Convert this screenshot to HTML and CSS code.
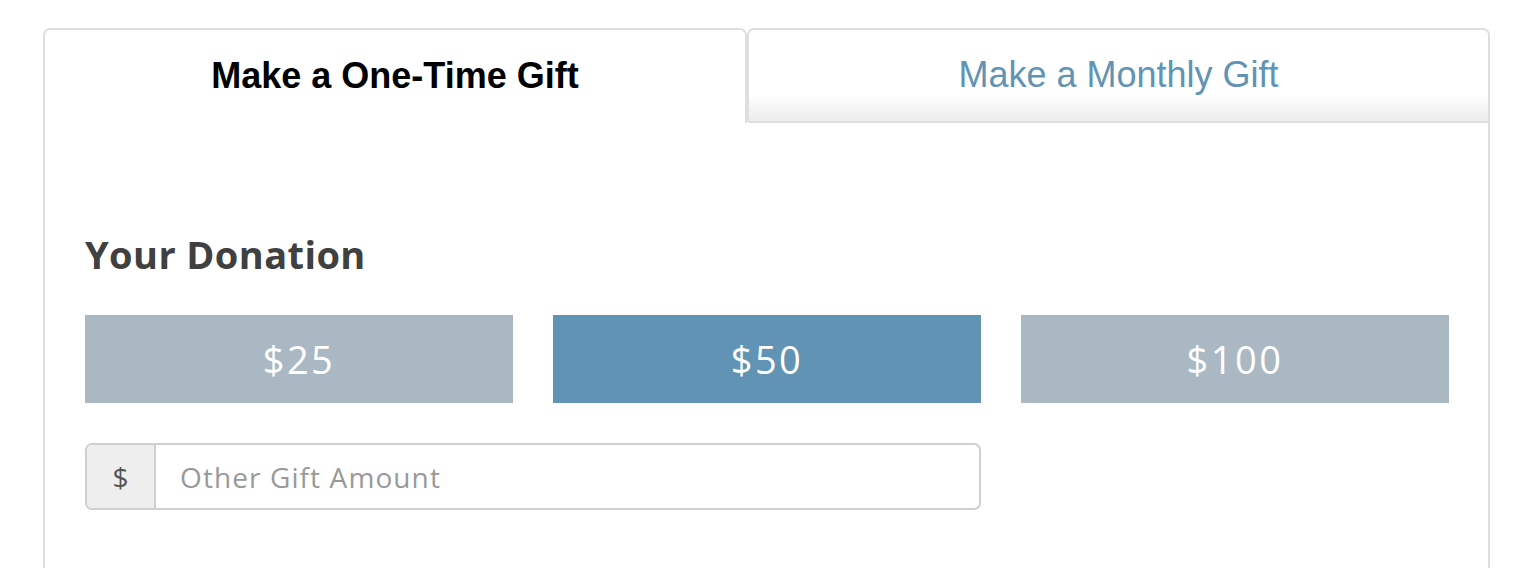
FILE: index.html
```html
<!DOCTYPE html>
<html>
<head>
<meta charset="utf-8">
<link rel="stylesheet" href="styles.css">
</head>
<body>
<div class="wrap">
  <div class="tabs">
    <div class="tab active">Make a One-Time Gift</div>
    <div class="tab inactive">Make a Monthly Gift</div>
  </div>
  <div class="panel">
    <h2 class="title">Your Donation</h2>
    <div class="amounts">
      <div class="amt">$25</div>
      <div class="amt selected">$50</div>
      <div class="amt">$100</div>
    </div>
    <div class="other">
      <span class="addon">$</span>
      <span class="field">Other Gift Amount</span>
    </div>
  </div>
</div>
</body>
</html>
```
FILE: styles.css
```css
html, body { margin: 0; padding: 0; background: #fff; overflow: hidden; }
.wrap { padding: 28px 32px 0 43px; }
.tabs { display: flex; height: 95px; }
.tab {
  box-sizing: border-box;
  display: flex; align-items: center; justify-content: center;
  font-family: "Liberation Sans", Arial, sans-serif;
  font-size: 36px;
  border: 2px solid #dedede;
  border-radius: 7px 7px 0 0;
  padding-bottom: 2px;
}
.tab.active { width: 704px; border-bottom: none; font-weight: bold; color: #000; background: #fff; }
.tab.inactive {
  flex: 1; color: #6193b5;
  border-radius: 7px 7px 0 3px;
  background: linear-gradient(to bottom, #fff 0%, #fff 70%, #ececec 100%);
}
.panel {
  border-left: 2px solid #dedede;
  border-right: 2px solid #dedede;
  padding: 106px 39px 60px 40px;
}
.title {
  margin: 0 0 36px 0;
  font-family: "Open Sans", sans-serif;
  font-weight: 700;
  font-size: 38px;
  letter-spacing: 0.4px;
  line-height: 50px;
  color: #404040;
}
.amounts { display: flex; gap: 40px; }
.amt {
  flex: 1; height: 88px;
  display: flex; align-items: center; justify-content: center;
  background: #aab8c4; color: #fff;
  font-family: "Open Sans", sans-serif; font-size: 38px;
  letter-spacing: 2.5px;
}
.amt.selected { background: #6193b5; }
.other {
  margin-top: 40px;
  width: 896px; height: 67px; box-sizing: border-box;
  display: flex;
  border: 2px solid #cfcfcf; border-radius: 7px;
  font-family: "Open Sans", sans-serif;
}
.addon {
  width: 67px; background: #eee; border-right: 2px solid #cfcfcf;
  border-radius: 5px 0 0 5px;
  display: flex; align-items: center; justify-content: center;
  font-size: 28px; color: #555;
}
.field {
  flex: 1; display: flex; align-items: center;
  padding-left: 24px; font-size: 28px; letter-spacing: 1.1px; color: #999;
}
```
